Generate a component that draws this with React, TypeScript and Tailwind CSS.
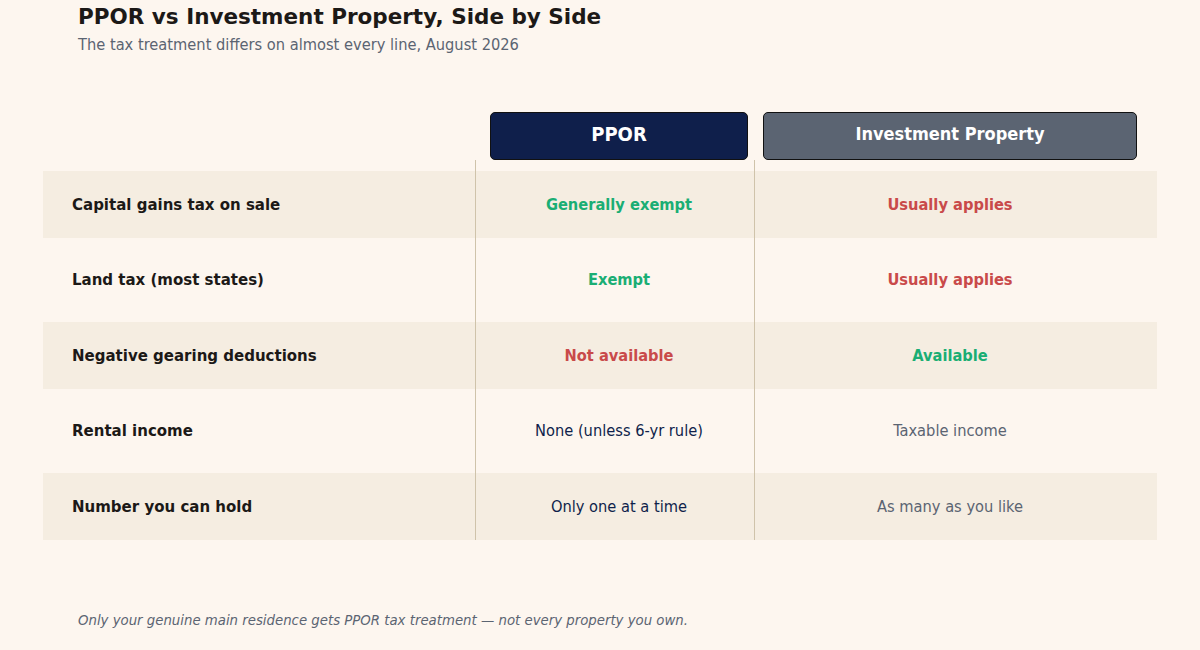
import React from "react";

type Tone = "good" | "bad" | "plain" | "muted";

const ROWS: { label: string; ppor: [string, Tone]; inv: [string, Tone] }[] = [
  { label: "Capital gains tax on sale", ppor: ["Generally exempt", "good"], inv: ["Usually applies", "bad"] },
  { label: "Land tax (most states)", ppor: ["Exempt", "good"], inv: ["Usually applies", "bad"] },
  { label: "Negative gearing deductions", ppor: ["Not available", "bad"], inv: ["Available", "good"] },
  { label: "Rental income", ppor: ["None (unless 6-yr rule)", "plain"], inv: ["Taxable income", "muted"] },
  { label: "Number you can hold", ppor: ["Only one at a time", "plain"], inv: ["As many as you like", "muted"] },
];

const toneClass: Record<Tone, string> = {
  good: "font-bold text-[#1aae74]",
  bad: "font-bold text-[#c94a4a]",
  plain: "text-[#0f1f4b]",
  muted: "text-[#5b6472]",
};

export default function App() {
  return (
    <div className="w-[1200px] h-[650px] bg-[#fdf6ef] font-['DejaVu_Sans',sans-serif] flex flex-col">
      {/* Title */}
      <div className="pl-[78px] pt-[4px]">
        <h1 className="text-[21.5px] leading-[26px] font-bold text-[#1c1917]">PPOR vs Investment Property, Side by Side</h1>
        <p className="mt-[5px] text-[16.3px] leading-[20px] text-[#5b6472] font-['DejaVu_Sans_Condensed','DejaVu_Sans',sans-serif]">
          The tax treatment differs on almost every line, August 2026
        </p>
      </div>

      {/* Table */}
      <div className="mt-[57px] mx-[43px] grid grid-cols-[432px_279px_403px] font-['DejaVu_Sans_Condensed','DejaVu_Sans',sans-serif]">
        {/* Header */}
        <div />
        <div className="pl-[15px] pr-[6px]">
          <div className="h-[48px] pb-[4px] rounded-[5px] border border-[#111] bg-[#0f1f4b] flex items-center justify-center text-white font-bold text-[20px]">
            PPOR
          </div>
        </div>
        <div className="pl-[9px] pr-[20px]">
          <div className="h-[48px] pb-[5px] rounded-[5px] border border-[#111] bg-[#5b6472] flex items-center justify-center text-white font-bold text-[18px]">
            Investment Property
          </div>
        </div>

        {/* spacer down to first row */}
        <div className="h-[11px]" />
        <div className="h-[11px] border-l border-[#cfc3aa]" />
        <div className="h-[11px] border-l border-[#cfc3aa]" />

        {ROWS.map((r, i) => {
          const shaded = i % 2 === 0;
          const pad = i === ROWS.length - 1 ? "pb-0" : i % 2 === 0 ? "pb-[8px]" : "pb-[9px]";
          const bg = shaded ? "bg-[#f5ede1]" : "bg-transparent";
          return (
            <React.Fragment key={r.label}>
              <div className={`${pad} ${bg} bg-clip-content`}>
                <div className="h-[67px] pt-[2px] pl-[29px] flex items-center text-[15px] font-bold text-[#1c1917] font-['DejaVu_Sans',sans-serif]">{r.label}</div>
              </div>
              <div className={`${pad} ${bg} bg-clip-content border-l border-[#cfc3aa]`}>
                <div className={`h-[67px] pt-[2px] ml-[14px] mr-[6px] flex items-center justify-center text-[16.3px] ${toneClass[r.ppor[1]]}`}>
                  {r.ppor[0]}
                </div>
              </div>
              <div className={`${pad} ${bg} bg-clip-content border-l border-[#cfc3aa]`}>
                <div className={`h-[67px] pt-[2px] ml-[8px] mr-[20px] flex items-center justify-center text-[16.3px] ${toneClass[r.inv[1]]}`}>
                  {r.inv[0]}
                </div>
              </div>
            </React.Fragment>
          );
        })}
      </div>

      {/* Footnote */}
      <p className="mt-[72px] pl-[78px] text-[13.3px] leading-[18px] italic text-[#5b6472]">
        Only your genuine main residence gets PPOR tax treatment — not every property you own.
      </p>
    </div>
  );
}
